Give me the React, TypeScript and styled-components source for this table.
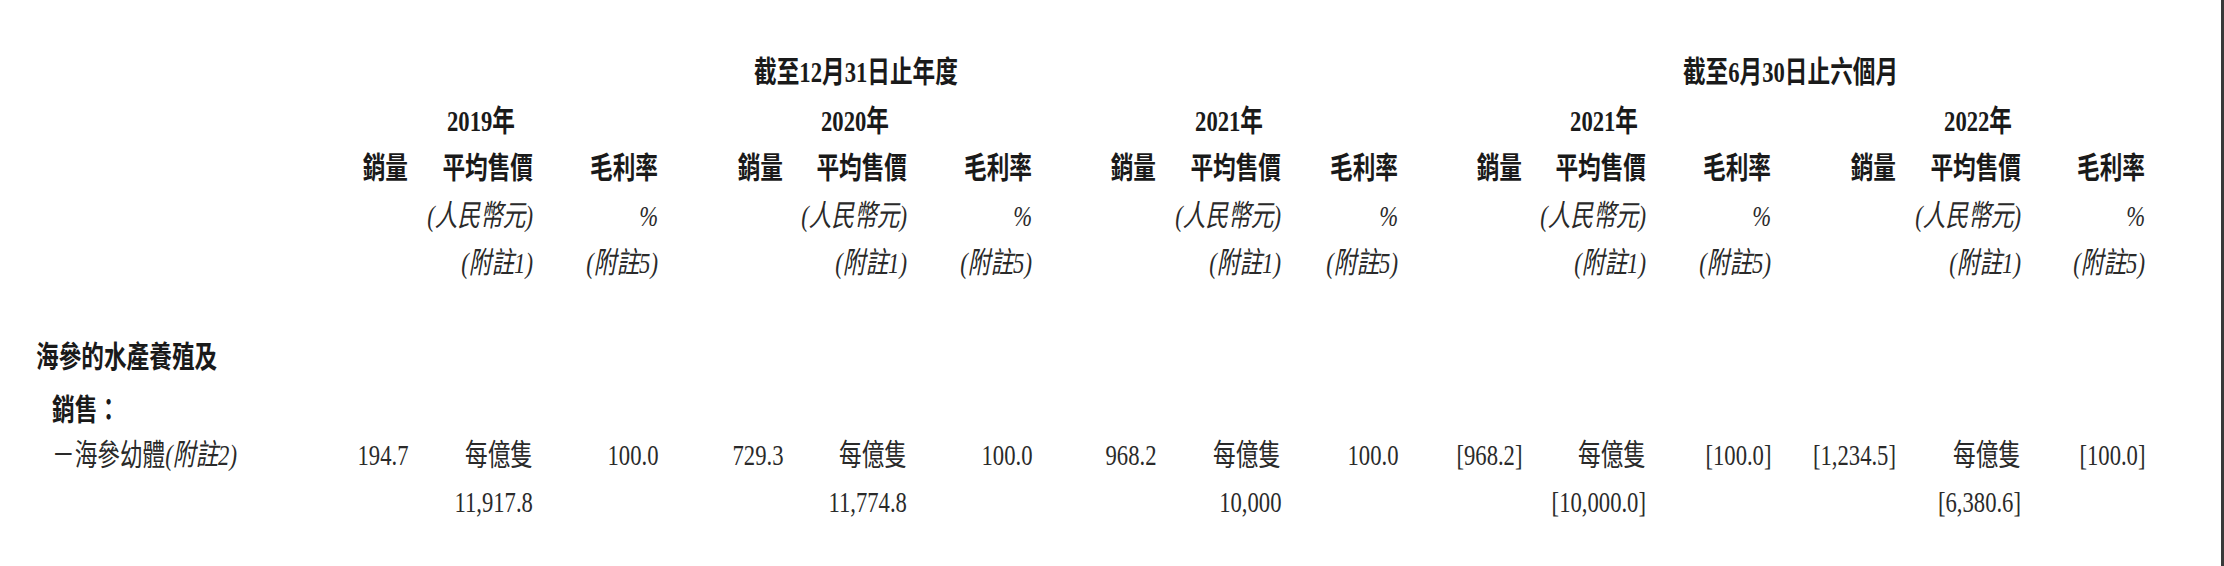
import React from "react";
import styled, { createGlobalStyle } from "styled-components";

const GlobalStyle = createGlobalStyle`
  html, body {
    margin: 0;
    padding: 0;
    background: #ffffff;
  }
  body {
    font-family: "Liberation Serif", "Noto Sans CJK TC", serif;
    color: #231f20;
  }
`;

const COLS = [283, 125, 125, 125, 125, 124, 125, 124, 125, 117, 124, 124, 125, 125, 125, 124];
const ROWS = [48, 50, 44, 52, 42, 52, 42, 64, 26, 68];

const Page = styled.div`
  box-sizing: border-box;
  width: 2224px;
  height: 566px;
  border-right: 3px solid #3a3a3a;
  padding-top: 48px;
  overflow: hidden;
`;

const Table = styled.div`
  display: grid;
  grid-template-columns: ${COLS.map((c) => `${c}px`).join(" ")};
  grid-template-rows: ${ROWS.map((r) => `${r}px`).join(" ")};
`;

type Align = "left" | "center" | "right";

const Cell = styled.div<{
  $col: number;
  $row: number;
  $span?: number;
  $align?: Align;
  $pl?: number;
  $pr?: number;
}>`
  grid-column: ${(p) => p.$col} / span ${(p) => p.$span ?? 1};
  grid-row: ${(p) => p.$row};
  display: flex;
  align-items: center;
  justify-content: ${(p) =>
    p.$align === "left" ? "flex-start" : p.$align === "center" ? "center" : "flex-end"};
  padding-left: ${(p) => p.$pl ?? 0}px;
  padding-right: ${(p) => p.$pr ?? 0}px;
  min-width: 0;
`;

const Text = styled.span<{ $align?: Align; $bold?: boolean; $italic?: boolean }>`
  display: inline-block;
  white-space: nowrap;
  font-size: 30px;
  line-height: 30px;
  font-weight: ${(p) => (p.$bold ? 700 : 400)};
  font-style: ${(p) => (p.$italic ? "italic" : "normal")};
  color: ${(p) => (p.$bold ? "#1a1a1a" : "#2a2a2a")};
  transform: scaleX(0.755);
  transform-origin: ${(p) => p.$align ?? "right"} center;
  flex-shrink: 0;
`;

const Note = styled.span`
  font-style: italic;
`;

type Period = {
  year: string;
  yearPad: number;
  vol: string;
  unit: string;
  price: string;
  margin: string;
};

const periods: Period[] = [
  { year: "2019年", yearPad: 18, vol: "194.7", unit: "每億隻", price: "11,917.8", margin: "100.0" },
  { year: "2020年", yearPad: 18, vol: "729.3", unit: "每億隻", price: "11,774.8", margin: "100.0" },
  { year: "2021年", yearPad: 18, vol: "968.2", unit: "每億隻", price: "10,000", margin: "100.0" },
  { year: "2021年", yearPad: 8, vol: "[968.2]", unit: "每億隻", price: "[10,000.0]", margin: "[100.0]" },
  { year: "2022年", yearPad: 9, vol: "[1,234.5]", unit: "每億隻", price: "[6,380.6]", margin: "[100.0]" },
];

export default function App() {
  return (
    <>
      <GlobalStyle />
      <Page>
        <Table>
          <Cell $col={5} $span={3} $row={1} $align="center" $pl={22}>
            <Text $bold $align="center">截至12月31日止年度</Text>
          </Cell>
          <Cell $col={11} $span={6} $row={1} $align="center" $pl={37}>
            <Text $bold $align="center">截至6月30日止六個月</Text>
          </Cell>

          {periods.map((p, i) => {
            const vol = 2 + i * 3;
            const price = vol + 1;
            const margin = vol + 2;
            return (
              <React.Fragment key={i}>
                <Cell $col={price} $row={2} $pr={p.yearPad}>
                  <Text $bold>{p.year}</Text>
                </Cell>

                <Cell $col={vol} $row={3}>
                  <Text $bold>銷量</Text>
                </Cell>
                <Cell $col={price} $row={3}>
                  <Text $bold>平均售價</Text>
                </Cell>
                <Cell $col={margin} $row={3}>
                  <Text $bold>毛利率</Text>
                </Cell>

                <Cell $col={price} $row={4}>
                  <Text $italic>(人民幣元)</Text>
                </Cell>
                <Cell $col={margin} $row={4}>
                  <Text $italic>%</Text>
                </Cell>

                <Cell $col={price} $row={5}>
                  <Text $italic>(附註1)</Text>
                </Cell>
                <Cell $col={margin} $row={5}>
                  <Text $italic>(附註5)</Text>
                </Cell>

                <Cell $col={vol} $row={9}>
                  <Text>{p.vol}</Text>
                </Cell>
                <Cell $col={price} $row={9}>
                  <Text>{p.unit}</Text>
                </Cell>
                <Cell $col={margin} $row={9}>
                  <Text>{p.margin}</Text>
                </Cell>
                <Cell $col={price} $row={10}>
                  <Text>{p.price}</Text>
                </Cell>
              </React.Fragment>
            );
          })}

          <Cell $col={1} $row={7} $align="left" $pl={36}>
            <Text $bold $align="left">海參的水產養殖及</Text>
          </Cell>
          <Cell $col={1} $row={8} $align="left" $pl={52}>
            <Text $bold $align="left">銷售：</Text>
          </Cell>
          <Cell $col={1} $row={9} $align="left" $pl={52}>
            <Text $align="left">
              －海參幼體<Note>(附註2)</Note>
            </Text>
          </Cell>
        </Table>
      </Page>
    </>
  );
}
